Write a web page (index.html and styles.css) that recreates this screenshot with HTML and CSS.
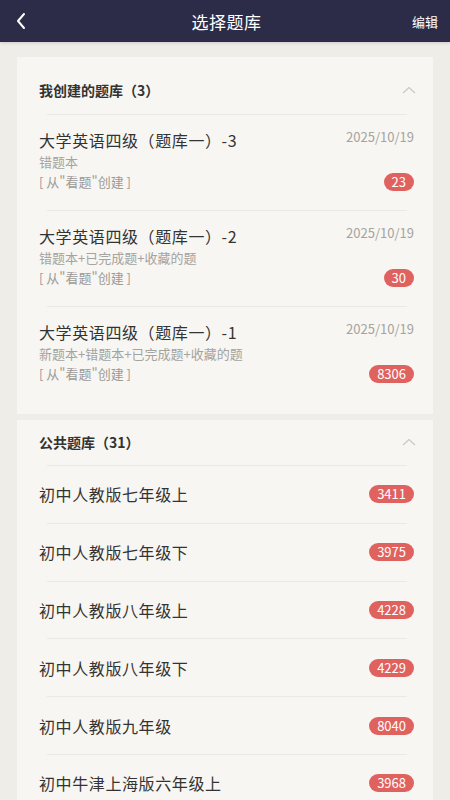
FILE: index.html
```html
<!DOCTYPE html>
<html lang="zh-CN">
<head>
    <meta charset="UTF-8">
    <meta name="viewport" content="width=device-width, initial-scale=1.0">
    <title>选择题库</title>
    <link rel="stylesheet" href="styles.css">
</head>
<body>

    <!-- Top bar -->
    <div class="topbar">
        <span class="back">
            <svg width="12" height="18" viewBox="0 0 12 18"><polyline points="9,2 3,9 9,16" fill="none" stroke="#fff" stroke-width="2" stroke-linecap="round" stroke-linejoin="round"/></svg>
        </span>
        <div class="topbar-title">选择题库</div>
        <span class="edit">编辑</span>
    </div>

    <!-- My banks -->
    <div class="card">
        <div class="card-head first">
            <span>我创建的题库（3）</span>
            <svg class="chev" width="14" height="8" viewBox="0 0 14 8"><polyline points="1,7 7,1.5 13,7" fill="none" stroke="#c9c7c2" stroke-width="1.2"/></svg>
        </div>

        <div class="item">
            <div class="item-inner mine">
                <div class="row">
                    <span class="name">大学英语四级（题库一）-3</span>
                    <span class="date">2025/10/19</span>
                </div>
                <div class="sub">错题本</div>
                <div class="row">
                    <span class="from">[ 从"看题"创建 ]</span>
                    <span class="badge">23</span>
                </div>
            </div>
        </div>

        <div class="item">
            <div class="item-inner mine">
                <div class="row">
                    <span class="name">大学英语四级（题库一）-2</span>
                    <span class="date">2025/10/19</span>
                </div>
                <div class="sub">错题本+已完成题+收藏的题</div>
                <div class="row">
                    <span class="from">[ 从"看题"创建 ]</span>
                    <span class="badge">30</span>
                </div>
            </div>
        </div>

        <div class="item">
            <div class="item-inner mine">
                <div class="row">
                    <span class="name">大学英语四级（题库一）-1</span>
                    <span class="date">2025/10/19</span>
                </div>
                <div class="sub">新题本+错题本+已完成题+收藏的题</div>
                <div class="row">
                    <span class="from">[ 从"看题"创建 ]</span>
                    <span class="badge">8306</span>
                </div>
            </div>
        </div>
    </div>

    <!-- Public banks -->
    <div class="card">
        <div class="card-head">
            <span>公共题库（31）</span>
            <svg class="chev" width="14" height="8" viewBox="0 0 14 8"><polyline points="1,7 7,1.5 13,7" fill="none" stroke="#c9c7c2" stroke-width="1.2"/></svg>
        </div>

        <div class="item"><div class="item-inner pub"><span class="name">初中人教版七年级上</span><span class="badge">3411</span></div></div>
        <div class="item"><div class="item-inner pub"><span class="name">初中人教版七年级下</span><span class="badge">3975</span></div></div>
        <div class="item"><div class="item-inner pub"><span class="name">初中人教版八年级上</span><span class="badge">4228</span></div></div>
        <div class="item"><div class="item-inner pub"><span class="name">初中人教版八年级下</span><span class="badge">4229</span></div></div>
        <div class="item"><div class="item-inner pub"><span class="name">初中人教版九年级</span><span class="badge">8040</span></div></div>
        <div class="item"><div class="item-inner pub"><span class="name">初中牛津上海版六年级上</span><span class="badge">3968</span></div></div>
    </div>

</body>
</html>
```

FILE: styles.css
```css
body {
    font-family: "Noto Sans CJK SC", "Noto Sans", sans-serif;
    margin: 0;
    padding: 0;
    background-color: #efede8;
    color: #333;
}
.topbar {
    background-color: #2d2c48;
    height: 42px;
    display: flex;
    align-items: center;
    padding: 0 12px 0 15px;
    box-shadow: 0 1px 3px rgba(0, 0, 0, 0.15);
}
.back {
    width: 40px;
    display: flex;
    align-items: center;
}
.topbar-title {
    flex: 1;
    text-align: center;
    color: #fff;
    font-size: 17px;
    letter-spacing: 0.5px;
}
.edit {
    width: 40px;
    text-align: right;
    color: #fff;
    font-size: 13px;
}
.card {
    background: #f7f6f2;
    margin: 15px 17px 0;
    padding-bottom: 12px;
}
.card + .card {
    margin-top: 6px;
}
.card-head {
    display: flex;
    justify-content: space-between;
    align-items: center;
    padding: 12px 17px 13px 22px;
    line-height: 20px;
    font-size: 14px;
    font-weight: bold;
    color: #333;
}
.card-head.first {
    padding-top: 23px;
    padding-bottom: 14px;
}
.chev {
    display: block;
}
.item {
    margin: 0 26px 0 30px;
    border-top: 1px solid #ebe9e4;
}
.item-inner {
    margin: 0 -7px 0 -8px;
}
.item-inner.mine {
    padding: 13px 0 18px;
}
.item-inner.pub {
    height: 56.8px;
    display: flex;
    justify-content: space-between;
    align-items: center;
}
.row {
    display: flex;
    justify-content: space-between;
    align-items: center;
}
.name {
    font-size: 16px;
    line-height: 24px;
    letter-spacing: 0.6px;
    color: #333;
}
.date {
    font-size: 13px;
    color: #a5a3a0;
    align-self: flex-start;
    line-height: 20px;
    margin-top: -1px;
}
.sub {
    font-size: 13px;
    line-height: 20px;
    color: #a5a3a0;
}
.from {
    font-size: 13px;
    line-height: 20px;
    color: #9c9a97;
}
.badge {
    background: #e0625f;
    color: #fff;
    font-size: 13px;
    line-height: 18px;
    padding: 0 8px;
    border-radius: 9px;
}
```
